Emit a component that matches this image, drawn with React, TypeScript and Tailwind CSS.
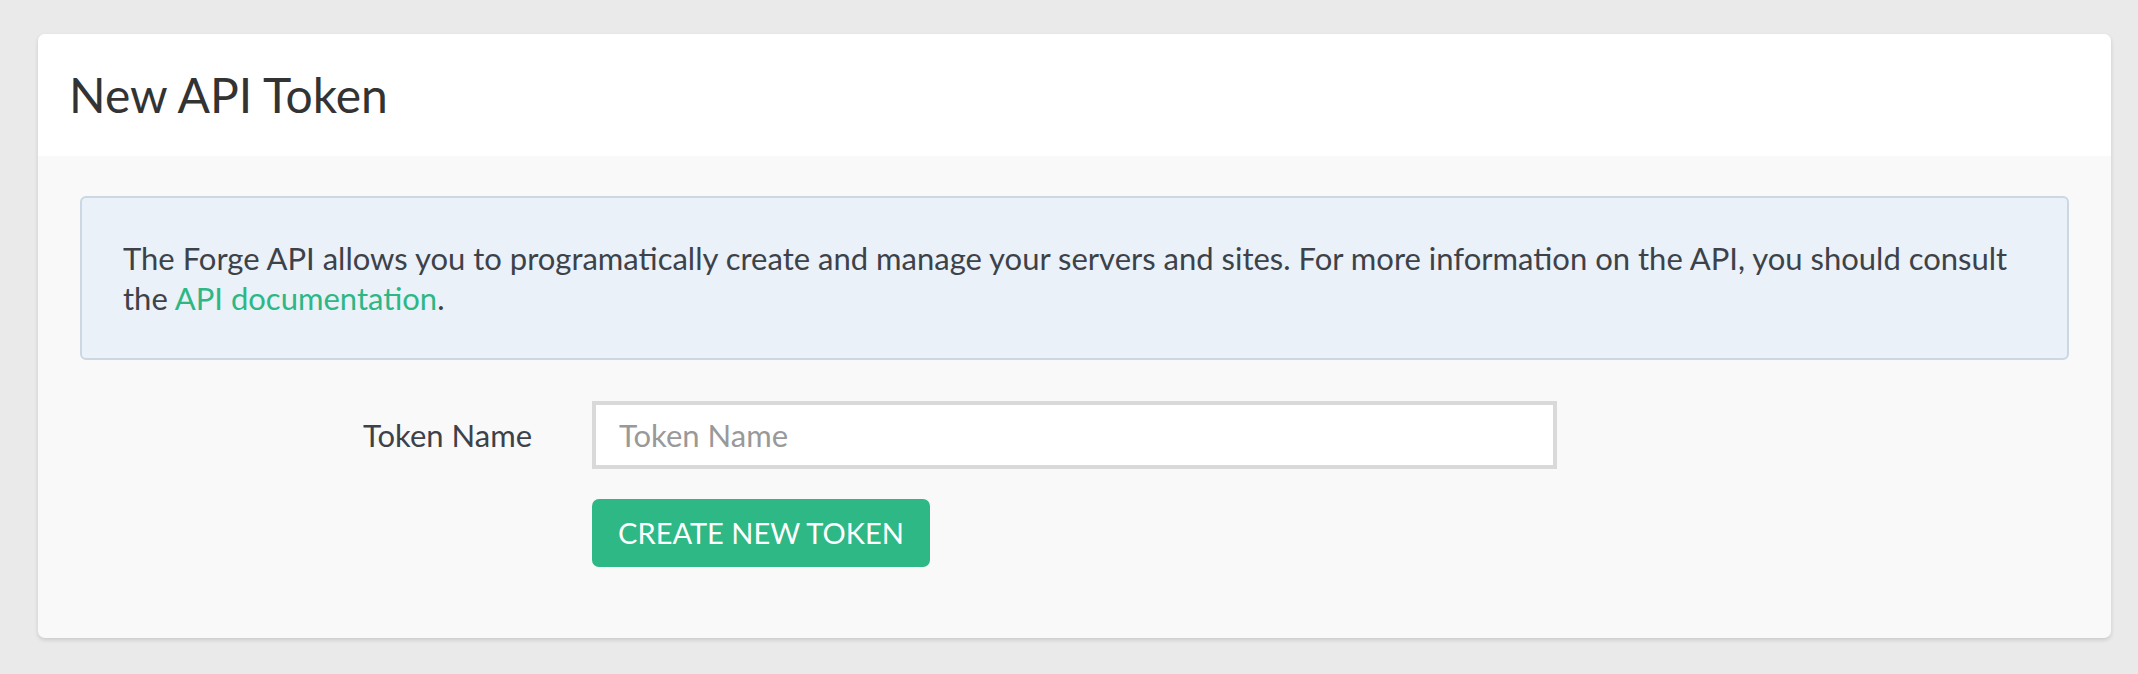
export default function App() {
  return (
    <div className="min-h-[674px] bg-[#eaeaea] pt-[34px] pl-[38px] pr-[27px] pb-[37px] font-['Lato','Liberation_Sans',sans-serif]">
      <div className="rounded-[7px] bg-[#f9f9f9] shadow-[0_2px_4px_rgba(0,0,0,0.14)] overflow-hidden">
        <div className="h-[122px] bg-white px-[31px] flex items-center">
          <h1 className="text-[48px] leading-none text-[#333333]">New API Token</h1>
        </div>

        <div className="px-[42px] pt-[40px] pb-[71px]">
          <div className="rounded-[6px] border-2 border-[#cbd7e3] bg-[#eaf1f8] px-[41px] py-[40px] text-[31px] leading-[40px] text-[#3d4249]">
            The Forge API allows you to programatically create and manage your servers and sites. For more information on the API, you should consult the{" "}
            <a href="#" className="text-[#2db785]">API documentation</a>.
          </div>

          <div className="mt-[41px] flex items-center">
            <label className="w-[452px] text-right text-[31px] text-[#3d4249]">Token Name</label>
            <input
              type="text"
              placeholder="Token Name"
              className="ml-[60px] w-[965px] h-[68px] border-4 border-[#d9d9d9] bg-white px-[23px] text-[31px] text-[#333] placeholder:text-[#999999] outline-none"
            />
          </div>

          <div className="mt-[30px] pl-[512px]">
            <button className="h-[68px] w-[338px] rounded-[7px] bg-[#2db886] text-[29px] uppercase text-white">
              Create New Token
            </button>
          </div>
        </div>
      </div>
    </div>
  )
}
